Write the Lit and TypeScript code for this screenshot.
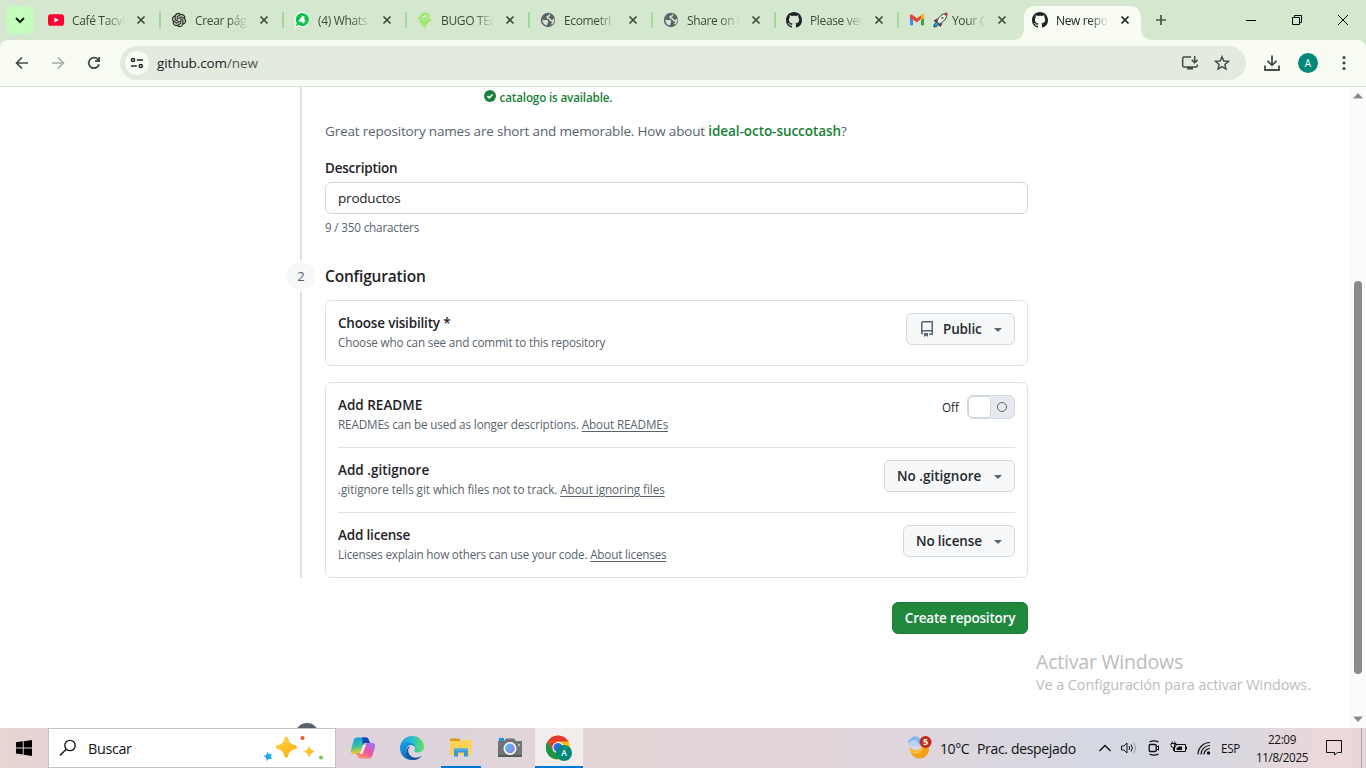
import { LitElement, html, css, svg } from "lit";
import { customElement } from "lit/decorators.js";

const githubMark = "M8 0c4.42 0 8 3.58 8 8a8.013 8.013 0 0 1-5.45 7.59c-.4.08-.55-.17-.55-.38 0-.27.01-1.13.01-2.2 0-.75-.25-1.23-.54-1.48 1.78-.2 3.65-.88 3.65-3.95 0-.88-.31-1.59-.82-2.15.08-.2.36-1.02-.08-2.12 0 0-.67-.22-2.2.82-.64-.18-1.32-.27-2-.27-.68 0-1.36.09-2 .27-1.53-1.03-2.2-.82-2.2-.82-.44 1.1-.16 1.92-.08 2.12-.51.56-.82 1.28-.82 2.15 0 3.06 1.86 3.75 3.64 3.95-.23.2-.44.55-.51 1.07-.46.21-1.61.55-2.33-.66-.15-.24-.6-.83-1.23-.82-.67.01-.27.38.01.53.34.19.73.9.82 1.13.16.45.68 1.31 2.69.94 0 .67.01 1.3.01 1.49 0 .21-.15.45-.55.38A7.995 7.995 0 0 1 0 8c0-4.42 3.58-8 8-8Z";
const knot = "M22.2819 9.8211a5.9847 5.9847 0 0 0-.5157-4.9108 6.0462 6.0462 0 0 0-6.5098-2.9A6.0651 6.0651 0 0 0 4.9807 4.1818a5.9847 5.9847 0 0 0-3.9977 2.9 6.0462 6.0462 0 0 0 .7427 7.0966 5.98 5.98 0 0 0 .511 4.9107 6.051 6.051 0 0 0 6.5146 2.9001A5.9847 5.9847 0 0 0 13.2599 24a6.0557 6.0557 0 0 0 5.7718-4.2058 5.9894 5.9894 0 0 0 3.9977-2.9001 6.0557 6.0557 0 0 0-.7475-7.0729zm-9.022 12.6081a4.4755 4.4755 0 0 1-2.8764-1.0408l.1419-.0804 4.7783-2.7582a.7948.7948 0 0 0 .3927-.6813v-6.7369l2.02 1.1686a.071.071 0 0 1 .038.052v5.5826a4.504 4.504 0 0 1-4.4945 4.4944zm-9.6607-4.1254a4.4708 4.4708 0 0 1-.5346-3.0137l.142.0852 4.783 2.7582a.7712.7712 0 0 0 .7806 0l5.8428-3.3685v2.3324a.0804.0804 0 0 1-.0332.0615L9.74 19.9502a4.4992 4.4992 0 0 1-6.1408-1.6464zM2.3408 7.8956a4.485 4.485 0 0 1 2.3655-1.9728V11.6a.7664.7664 0 0 0 .3879.6765l5.8144 3.3543-2.0201 1.1685a.0757.0757 0 0 1-.071 0l-4.8303-2.7865A4.504 4.504 0 0 1 2.3408 7.872zm16.5963 3.8558L13.1038 8.364 15.1192 7.2a.0757.0757 0 0 1 .071 0l4.8303 2.7913a4.4944 4.4944 0 0 1-.6765 8.1042v-5.6772a.79.79 0 0 0-.407-.667zm2.0107-3.0231l-.142-.0852-4.7735-2.7818a.7759.7759 0 0 0-.7854 0L9.409 9.2297V6.8974a.0662.0662 0 0 1 .0284-.0615l4.8303-2.7866a4.4992 4.4992 0 0 1 6.6802 4.66zM8.3065 12.863l-2.02-1.1638a.0804.0804 0 0 1-.038-.0567V6.0742a4.4992 4.4992 0 0 1 7.3757-3.4537l-.142.0805L8.704 5.459a.7948.7948 0 0 0-.3927.6813zm1.0976-2.3654l2.602-1.4998 2.6069 1.4998v2.9994l-2.5974 1.4997-2.6067-1.4997Z";

const icon = (w: number, h: number, body: unknown, vb = `0 0 ${w} ${h}`) =>
  html`<svg width=${w} height=${h} viewBox=${vb} fill="none">${body}</svg>`;

const globe = icon(16, 16, svg`<circle cx="8" cy="8" r="7.200" fill="#5f6368"/><path d="M2.300 7.300C4 9.200 6.300 7.200 7.800 8.600 9 9.800 7.200 10.800 7.600 12.200L6.500 13.600C4.300 13 2.300 11 2.300 7.300Z" fill="#d5e7cf"/><path d="M9.300 2.300c.7 1.400-.5 2-1.500 2.200-1.200.3-.6 1.700.6 1.700 1.800 0 1.600 2 2.700 2.500 1 .4 1.900-.2 2.600-.8-.1 1.800-.9 3.300-2.200 4.400" stroke="#d5e7cf" stroke-width="1.500"/>`);
const octo = icon(16, 16, svg`<path d=${githubMark} fill="#1f2328"/>`);

const favicons: Record<string, unknown> = {
  youtube: icon(16, 16, svg`<rect y="2.200" width="16" height="11.600" rx="2.600" fill="#ff0033"/><path d="M6.400 5.500v5L10.700 8Z" fill="#fff"/>`),
  chat: icon(16, 16, svg`<path d=${knot} transform="translate(1 1) scale(.5833)" fill="#222" stroke="#222" stroke-width=".5"/>`),
  whatsapp: icon(16, 16, svg`<path d="M8.200 0a7.500 7.500 0 1 1-3.600 14.200L.4 15.700 1.500 11.500A7.500 7.500 0 0 1 8.200 0Z" fill="#fff"/><path d="M8.200 1.100a6.500 6.500 0 1 1-3.300 12L2 14l.8-2.900A6.500 6.500 0 0 1 8.200 1.100Z" fill="#0fc243"/><path d="M9.200 4 6 8.800h5.200M9.400 4V11.300" stroke="#fff" stroke-width="1.900"/>`),
  bugo: icon(16, 16, svg`<path d="M4.500 11C2 8 3.500 2 8.500 1.700c3.500 0 4 2.800 2 4.300-1.500 1-3.500 1.500-5 1.200M4.500 8c1 3.500 5 3.300 9.500-.8" stroke="#9bea66" stroke-width="2.300"/><path d="M1.200 6.500 3 5M4.500 11.300c2 1.200 4.500 1.200 6 0" stroke="#9bea66" stroke-width="2"/><circle cx="7.600" cy="14.600" r="1.400" fill="#9bea66"/>`),
  globe,
  github: octo,
  gmail: icon(16, 16, svg`<path d="M1 3.500V13.300h3V7.500Z" fill="#4285f4"/><path d="M12 7.500v5.800h3V3.500Z" fill="#34a853"/><path d="M1 5.800V4c0-1.400 1.500-1.900 2.500-1.100L8 6.300l4.500-3.400C13.500 2.100 15 2.600 15 4L8 10.600Z" fill="#ea4335"/><path d="M12 3.300C13.200 2 15 2.600 15 4.200v1.700L12 8.200Z" fill="#fbbc04"/>`),
};

const rocket = icon(15, 16, svg`<path d="M4.300 6.700 1.200 8.900l2.600 1.200M9 11.400l-1.700 3-1.600-2.500" fill="#e8312a" stroke="#222" stroke-width=".8"/><path d="M4 9.600 1.200 12.300.9 15l2.500-.3 3-2.600Z" fill="#22a7f0" stroke="#222" stroke-width=".8"/><path d="M4 9.500C5.500 4.800 9 1.500 14 1.200c.2 4.800-3.300 8.800-7.800 10.900Z" fill="#f4f4f4" stroke="#222" stroke-width=".9"/><path d="M10.800 1.800 14 1.200l-.7 3.500Z" fill="#e8312a"/><circle cx="9.300" cy="6" r="1.300" fill="#777"/>`);

const tabs = [
  ["youtube", "Café Tacvb"], ["chat", "Crear pág"], ["whatsapp", "(4) Whats"], ["bugo", "BUGO TEC"],
  ["globe", "Ecometri"], ["globe", "Share on W"], ["github", "Please ver"], ["gmail", "Your G"], ["github", "New repo"],
];

const base = css`
  * { box-sizing: border-box; }
  :host { display: block; font-family: "Open Sans", "Noto Sans", sans-serif; }
  svg { display: block; flex: none; }
`;

@customElement("browser-chrome")
class BrowserChrome extends LitElement {
  static styles = [base, css`
    .strip { height: 40px; background: #d5e7cf; display: flex; align-items: flex-start; }
    .search { width: 28px; height: 28px; margin: 6px 6px 0; border-radius: 9px; background: #c5fdbd; display: grid; place-items: center; }
    .tab { width: 123px; height: 40px; padding-left: 8px; display: flex; align-items: center; position: relative; }
    .title { width: 53px; height: 18px; margin-left: 8px; white-space: nowrap; display: flex; align-items: center; gap: 4px; font-size: 12px; line-height: 18px; letter-spacing: -.35px; color: #3c4b3a;
      -webkit-mask-image: linear-gradient(90deg, #000 62%, transparent); mask-image: linear-gradient(90deg, #000 62%, transparent); }
    .title span { padding-top: 1px; }
    .close { margin-left: 11px; }
    .sep { width: 2px; height: 16px; margin-left: 13px; border-radius: 1px; background: #9fd898; }
    .active .title { color: #1c251b; }
    .active > * { position: relative; z-index: 1; }
    .active::before { content: ""; position: absolute; left: 0; top: 6px; width: 117px; height: 34px; border-radius: 10px 10px 0 0; background: #f8fcf3; }
    .active::after { content: ""; position: absolute; left: -10px; bottom: 0; width: 137px; height: 10px;
      background: radial-gradient(circle at 0 0, transparent 9.500px, #f8fcf3 10px) left / 10px 10px no-repeat, radial-gradient(circle at 10px 0, transparent 9.500px, #f8fcf3 10px) right / 10px 10px no-repeat; }
    .plus { margin: 14px 0 0 8px; }
    .controls { margin-left: auto; display: flex; gap: 30px; padding: 12px 15px 0 0; }
    .barwrap { background: #d5e7cf; }
    .bar { height: 47px; background: #f8fcf3; border-radius: 8px 8px 0 0; border-bottom: 1px solid #d9e4d2; display: flex; align-items: center; padding-left: 14px; }
    .nav { display: flex; gap: 20px; width: 106px; }
    .omni { width: 1126px; height: 34px; border-radius: 17px; background: #e3ebdf; display: flex; align-items: center; padding: 0 16px 0 5px; }
    .info { width: 24px; height: 24px; border-radius: 50%; background: #f8fcf3; display: grid; place-items: center; margin-right: 8px; }
    .url { flex: 1; font-size: 13.500px; letter-spacing: -.1px; color: #1a1f19; line-height: 20px; }
    .path { color: #4f584d; }
    .star { margin-left: 15px; }
    .dl { margin-left: 17px; }
    .avatar { width: 20px; height: 20px; margin-left: 17px; border-radius: 50%; background: #00897b; color: #fff; font-size: 10px; line-height: 20px; text-align: center; }
    .dots { margin-left: 24px; }
  `];
  render() {
    const x = (c: string) => icon(10, 10, svg`<path d="m1.500 1.500 7 7m0-7-7 7" stroke=${c} stroke-width="1.700"/>`);
    return html`
      <div class="strip">
        <div class="search">${icon(10, 8, svg`<path d="m1 2 4 4 4-4" stroke="#172016" stroke-width="2"/>`)}</div>
        ${tabs.map(([f, t], i) => html`
          <div class="tab ${i === 8 ? "active" : ""}">
            ${favicons[f]}
            <div class="title">${i === 7 ? rocket : ""}<span>${t}</span></div>
            <div class="close">${x(i === 8 ? "#1c251b" : "#3c4b3a")}</div>
            ${i < 7 ? html`<div class="sep"></div>` : ""}
          </div>`)}
        <div class="plus">${icon(12, 12, svg`<path d="M6 1v10M1 6h10" stroke="#465644" stroke-width="1.700"/>`)}</div>
        <div class="controls">
          ${icon(16, 16, svg`<path d="M3 8.500h10" stroke="#000"/>`)}
          ${icon(16, 16, svg`<path d="M3.500 5.500h7v7h-7zM5.500 5V3.500h7v7H11" stroke="#000"/>`)}
          ${icon(16, 16, svg`<path d="m3 3 10 10m0-10L3 13" stroke="#000"/>`)}
        </div>
      </div>
      <div class="barwrap"><div class="bar">
        <div class="nav">
          ${icon(16, 16, svg`<path d="M14 8H2.800M8 2.500 2.500 8 8 13.500" stroke="#3f4e3d" stroke-width="1.700"/>`)}
          ${icon(16, 16, svg`<path d="M2 8h11.200M8 2.500 13.500 8 8 13.500" stroke="#a4ada1" stroke-width="1.600"/>`)}
          ${icon(16, 16, svg`<path d="M13 9.200A5.200 5.200 0 1 1 11.900 4.500L13 5.700M13.100 2v4.200H9" stroke="#3f4e3d" stroke-width="1.800"/>`)}
        </div>
        <div class="omni">
          <div class="info">${icon(14, 14, svg`<g stroke="#20281f" stroke-width="1.500"><circle cx="3" cy="4" r="1.600"/><path d="M6.800 4H13M1 10h5.800"/><circle cx="10.800" cy="10" r="1.600"/></g>`)}</div>
          <div class="url">github.com<span class="path">/new</span></div>
          ${icon(18, 16, svg`<path d="M10 2H3a1.300 1.300 0 0 0-1.300 1.300v7.400A1.300 1.300 0 0 0 3 12h12a1.300 1.300 0 0 0 1.300-1.300V9.500M13.700 1v6.500M10.800 4.900l2.900 2.900 2.900-2.900" stroke="#3f4e3d" stroke-width="1.500"/><path d="M6 12h6v2.500H6z" fill="#3f4e3d"/>`)}
          <div class="star">${icon(16, 16, svg`<path d="m8 1.700 1.800 4.300 4.700.4-3.600 3.100 1.100 4.600L8 11.600l-4 2.500 1.100-4.600L1.500 6.400l4.700-.4Z" stroke="#3f4e3d" stroke-width="1.400"/>`)}</div>
        </div>
        <div class="dl">${icon(18, 18, svg`<path d="M9 1.500v9.500M4.500 6.800 9 11.300l4.500-4.500M2 11.500V16h14v-4.500" stroke="#3f4e3d" stroke-width="1.800"/>`)}</div>
        <div class="avatar">A</div>
        <div class="dots">${icon(4, 16, svg`<g fill="#3f4e3d"><circle cx="2" cy="2.500" r="1.600"/><circle cx="2" cy="8" r="1.600"/><circle cx="2" cy="13.500" r="1.600"/></g>`)}</div>
      </div></div>`;
  }
}

@customElement("repo-form")
class RepoForm extends LitElement {
  static styles = [base, css`
    :host { height: 641px; overflow: hidden; position: relative; background: #fff; color: #1f2328; display: flex; justify-content: space-between; }
    .col { width: 741px; margin-left: 287px; }
    .step { display: grid; grid-template-columns: 28px 703px; gap: 10px; }
    .rail { display: flex; flex-direction: column; align-items: center; }
    .line { width: 2px; flex: 1; background: #dfe3e8; }
    .one { height: 175px; }
    .one .rail { padding-bottom: 2px; }
    .two { height: 316px; }
    .num { width: 28px; height: 28px; margin-bottom: 2px; border-radius: 50%; background: #f6f8fa; color: #59636e; font-size: 13px; line-height: 29px; text-align: center; }
    .avail { display: flex; align-items: center; gap: 3.500px; height: 18px; padding-left: 159px; font-size: 11.700px; font-weight: 600; letter-spacing: -.17px; color: #1a7f37; }
    .avail span { padding-top: 1px; }
    .hint { margin-top: 16px; font-size: 13.500px; line-height: 21px; letter-spacing: -.175px; color: #59636e; white-space: nowrap; }
    .hint b { font-weight: 600; color: #1a7f37; letter-spacing: -.06px; }
    .label { margin-top: 16px; font-size: 13.500px; line-height: 20px; font-weight: 600; letter-spacing: -.22px; }
    .input { margin-top: 4px; height: 32px; border: 1px solid #d1d9e0; border-radius: 6px; padding: 0 12px; font-size: 13.500px; line-height: 31px; letter-spacing: -.2px; }
    .small { font-size: 11.700px; line-height: 18px; letter-spacing: -.17px; color: #59636e; white-space: nowrap; }
    .count { margin-top: 4px; letter-spacing: -.18px; }
    .readme .small { letter-spacing: -.13px; }
    .ignore .small { letter-spacing: -.06px; }
    .license .small { letter-spacing: -.19px; }
    h2 { margin: 3px 0 12px; font-size: 15.500px; line-height: 23px; font-weight: 600; letter-spacing: -.18px; }
    .box { border: 1px solid #dfe3e8; border-radius: 6px; padding: 0 12px; }
    .box + .box { margin-top: 16px; }
    .row { display: flex; justify-content: space-between; align-items: flex-start; height: 65px; padding-top: 12px; }
    .row + .row { border-top: 1px solid #dfe3e8; }
    .solo, .readme { height: 64px; }
    .name { font-size: 13.500px; line-height: 20px; font-weight: 600; letter-spacing: -.19px; }
    .readme .name, .ignore .name, .ignore .btn { letter-spacing: 0; }
    u { text-underline-offset: 2px; }
    .btn { height: 32px; border: 1px solid #d1d9e0; border-radius: 6px; background: #f6f8fa; display: flex; align-items: center; padding: 0 8px 0 12px; font-size: 13.500px; font-weight: 600; letter-spacing: -.15px; color: #25292e; white-space: nowrap; }
    .btn .repo { margin-right: 8px; }
    .btn .caret { margin-left: auto; }
    .vis { width: 109px; } .ign { width: 131px; } .lic { width: 112px; }
    .toggle { display: flex; align-items: center; gap: 8px; font-size: 11.700px; letter-spacing: 0; }
    .switch { width: 48px; height: 24px; border: 1px solid #d1d9e0; border-radius: 6px; background: #e6eaef; display: flex; align-items: center; }
    .knob { width: 23px; height: 22px; border: 1px solid #d1d9e0; border-radius: 5px; background: #fff; }
    .off { width: 10px; height: 10px; margin-left: 6px; border: 1.500px solid #59636e; border-radius: 50%; }
    .create { display: block; width: 136px; height: 32px; margin: 24px 0 0 auto; border-radius: 6px; border: 1px solid #1d7b36; background: #1f883d; color: #fff; text-align: center; font-size: 13.500px; line-height: 31px; font-weight: 600; letter-spacing: -.2px; white-space: nowrap; }
    .footer { margin: 89px 0 0 8px; }
    .bar { width: 16px; background: #fcfcfc; display: flex; flex-direction: column; align-items: center; padding: 6px 0; }
    .thumb { width: 8px; height: 393px; border-radius: 4px; background: #8b8b8b; margin-top: 182px; }
    .bar .down { margin-top: auto; }
    .mark { position: absolute; left: 1036px; top: 561px; color: #bbb; white-space: nowrap; }
    .big { font-size: 19.500px; line-height: 27px; letter-spacing: -.2px; }
    .sub { font-size: 14.400px; line-height: 20px; letter-spacing: -.06px; }
  `];
  render() {
    const caret = html`<span class="caret">${icon(16, 16, svg`<path fill="#59636e" d="m4.427 7.427 3.396 3.396a.25.25 0 0 0 .354 0l3.396-3.396A.25.25 0 0 0 11.396 7H4.604a.25.25 0 0 0-.177.427Z"/>`)}</span>`;
    return html`
      <div class="col">
        <div class="step one">
          <div class="rail"><div class="line"></div></div>
          <div>
            <div class="avail">${icon(12, 12, svg`<path fill="#1a7f37" d="M8 16A8 8 0 1 1 8 0a8 8 0 0 1 0 16Z"/><path d="m4.600 8.200 2.300 2.300 4.500-4.500" stroke="#fff" stroke-width="2"/>`, "0 0 16 16")}<span>catalogo is available.</span></div>
            <div class="hint">Great repository names are short and memorable. How about <b>ideal-octo-succotash</b>?</div>
            <div class="label">Description</div>
            <div class="input">productos</div>
            <div class="small count">9 / 350 characters</div>
          </div>
        </div>
        <div class="step two">
          <div class="rail"><div class="num">2</div><div class="line"></div></div>
          <div>
            <h2>Configuration</h2>
            <div class="box"><div class="row solo">
              <div><div class="name">Choose visibility *</div><div class="small">Choose who can see and commit to this repository</div></div>
              <div class="btn vis"><span class="repo">${icon(16, 16, svg`<path fill="#59636e" d="M2 2.500A2.500 2.500 0 0 1 4.500 0h8.750a.75.75 0 0 1 .75.75v12.500a.75.75 0 0 1-.75.75h-2.500a.75.75 0 0 1 0-1.500h1.750v-2h-8a1 1 0 0 0-.714 1.700.75.75 0 1 1-1.072 1.050A2.495 2.495 0 0 1 2 11.500Zm10.500-1h-8a1 1 0 0 0-1 1v6.708A2.486 2.486 0 0 1 4.500 9h8ZM5 12.250a.25.25 0 0 1 .25-.25h3.500a.25.25 0 0 1 .25.25v3.250a.25.25 0 0 1-.4.2l-1.450-1.087a.249.249 0 0 0-.3 0L5.400 15.700a.25.25 0 0 1-.4-.2Z"/>`)}</span>Public${caret}</div>
            </div></div>
            <div class="box">
              <div class="row readme">
                <div><div class="name">Add README</div><div class="small">READMEs can be used as longer descriptions. <u>About READMEs</u></div></div>
                <div class="toggle">Off<div class="switch"><div class="knob"></div><div class="off"></div></div></div>
              </div>
              <div class="row ignore">
                <div><div class="name">Add .gitignore</div><div class="small">.gitignore tells git which files not to track. <u>About ignoring files</u></div></div>
                <div class="btn ign">No .gitignore${caret}</div>
              </div>
              <div class="row license">
                <div><div class="name">Add license</div><div class="small">Licenses explain how others can use your code. <u>About licenses</u></div></div>
                <div class="btn lic">No license${caret}</div>
              </div>
            </div>
          </div>
        </div>
        <div class="create">Create repository</div>
        <div class="footer">${icon(24, 24, svg`<path d=${githubMark} fill="#59636e"/>`, "0 0 16 16")}</div>
      </div>
      <div class="bar">
        ${icon(10, 6, svg`<path d="m5 0 5 5.500H0Z" fill="#8b8b8b"/>`)}
        <div class="thumb"></div>
        <div class="down">${icon(10, 6, svg`<path d="m5 6 5-5.500H0Z" fill="#8b8b8b"/>`)}</div>
      </div>
      <div class="mark"><div class="big">Activar Windows</div><div class="sub">Ve a Configuración para activar Windows.</div></div>`;
  }
}

@customElement("task-bar")
class TaskBar extends LitElement {
  static styles = [base, css`
    .bar { height: 40px; display: flex; align-items: center; color: #111; background: linear-gradient(90deg, #e9d6d3 0, #e4d3d3 50px, #e0d3db 340px, #ddd5db 450px, #e4d5d6 600px, #e0d5dc 880px, #d5d9e3 1110px, #dcd7df 1250px, #ecd7d8 1335px, #e6d6da 1366px); }
    .start { width: 48px; display: grid; place-items: center; }
    .find { width: 288px; height: 40px; border: 1px solid #c5c5c5; background: #fff; display: flex; align-items: center; padding: 0 10px 0 10px; font-size: 14.400px; letter-spacing: -.35px; gap: 11px; }
    .find span { flex: 1; }
    .app { width: 49px; height: 40px; display: grid; place-items: center; }
    .first { margin-left: 2px; }
    .open { width: 40px; margin: 0 4px 0 5px; box-shadow: inset 0 -2px #0078d7; }
    .cur { width: 48px; margin-left: 1px; background: #f2ecec; box-shadow: inset 0 -2px #0078d7; }
    .wx { margin-left: 324px; }
    .temp { margin-left: 8px; font-size: 14px; letter-spacing: -.4px; width: 37px; white-space: nowrap; }
    .cond { font-size: 14px; letter-spacing: -.33px; width: 120px; white-space: nowrap; }
    .tray { display: flex; align-items: center; gap: 8px; margin-left: 1px; }
    .esp { font-size: 11.700px; letter-spacing: -.3px; margin-left: 1px; width: 23px; }
    .clock { width: 66px; margin-left: 5px; text-align: center; font-size: 11.700px; line-height: 18px; letter-spacing: -.35px; white-space: nowrap; }
    .note { margin-left: 10px; }
    .peek { margin-left: auto; width: 5px; height: 40px; border-left: 1px solid #aaa4a9; }
  `];
  render() {
    return html`<div class="bar">
      <div class="start">${icon(16, 16, svg`<path d="M0 2.300 6.800 1.300v6.200H0ZM7.700 1.200 16 0v7.500H7.700ZM0 8.400h6.800v6.200L0 13.600ZM7.700 8.400H16V16L7.700 14.800Z" fill="#000"/>`)}</div>
      <div class="find">
        ${icon(18, 18, svg`<circle cx="11" cy="6.500" r="5.200" stroke="#111" stroke-width="1.300"/><path d="M7.300 10.200 1 16.500" stroke="#111" stroke-width="1.400"/>`)}
        <span>Buscar</span>
        ${icon(62, 28, svg`<defs><linearGradient id="st" x2="1" y2="1"><stop stop-color="#ffdb55"/><stop offset="1" stop-color="#f6a800"/></linearGradient></defs>
          <path d="M21.500 4c.8-2 2.700-2 3.500 0 1.200 4.500 2.200 5.500 6.500 7 3.300 1.200 3.300 3 0 4.200-4.300 1.500-5.300 2.600-6.500 7-.8 2.200-2.700 2.200-3.500 0-1.200-4.400-2.200-5.500-6.500-7-3.300-1.200-3.300-3 0-4.200 4.300-1.500 5.300-2.500 6.500-7Z" fill="url(#st)"/>
          <path d="M46 11.500q1.200 5 6 6-4.800 1-6 6-1.200-5-6-6 4.800-1 6-6Z" fill="url(#st)"/>
          <path d="m4 17.500 1.700 2.400 3-.2-1 2.900 1.200 2.700-3-.6L3.500 27l-.3-3.200L.5 22l3-1Z" fill="#1ba8f0"/><circle cx="39.500" cy="4" r="2.100" fill="#f1592a"/><circle cx="58" cy="23.500" r="2" fill="#84c341"/>`)}
      </div>
      <div class="app first">${icon(26, 24, svg`<defs><linearGradient id="cl" x2=".2" y2="1"><stop stop-color="#0a9cf0"/><stop offset=".55" stop-color="#38bfa0"/><stop offset="1" stop-color="#f2cf24"/></linearGradient><linearGradient id="cr" x1=".7" x2=".1" y2="1"><stop stop-color="#a66cf0"/><stop offset=".5" stop-color="#f0559c"/><stop offset="1" stop-color="#ffa05a"/></linearGradient></defs>
        <path d="M7 1.500h9c2 0 2.500 1.500 3 3L20 7h-4c-2 0-2.700 1-3.300 3l-2 6c-.6 1.500-1.500 2-3 2H4c-3 0-3.500-2-3-4.500L3.500 5C4.200 2.500 5 1.500 7 1.500Z" fill="url(#cl)"/><path d="M12 1.500h4c2 0 2.500 1.500 3 3L20 7h-4c-2 0-2.500.5-3 2Z" fill="#1746b8"/>
        <path d="M19 22.500h-9c-2 0-2.500-1.500-3-3L6.200 17H10c2 0 2.700-1 3.300-3l2-5c.6-1.500 1.500-2 3-2H22c3 0 3.500 2 3 4.500L22.500 19c-.7 2.500-1.500 3.500-3.500 3.500Z" fill="url(#cr)"/><path d="M13 9h3l-3.500 9H10Z" fill="#f3e8f2"/>`)}</div>
      <div class="app">${icon(24, 24, svg`<defs><linearGradient id="e1" x2="1"><stop stop-color="#199be0"/><stop offset=".5" stop-color="#27bfd3"/><stop offset="1" stop-color="#65e257"/></linearGradient><linearGradient id="e2" x2=".5" y2="1"><stop stop-color="#1aa3e8"/><stop offset="1" stop-color="#0c65b8"/></linearGradient></defs>
        <path d="M0 11C1 4 6 0 12 0c7 0 12 5 12 10.500 0 4-3 6-6.500 6-3 0-4-1-3-2.200 1.200-1.600.6-5.300-3.500-5.300C6.500 9 3 9 0 11Z" fill="url(#e1)"/><path d="M0 12c0-4 3.500-6 7-6 4 0 7.500 2 8 5-1-1.500-2.500-2-4-2-3 0-4.500 2.500-4.500 5.500 0 4 3 8.500 8 9C7 25.500 0 20 0 12Z" fill="url(#e2)"/><path d="M10.500 10.500C8 12 7.500 15 9 18c2.300 4.300 8 5 13 1.500C19.500 23 16 24.500 12.500 23.800 7.500 22.500 5.500 17 7 13c.7-2 2-2.800 3.500-2.500Z" fill="#104f96"/>`)}</div>
      <div class="app open">${icon(22, 20, svg`<path d="M0 1.500Q0 .5 1 .5h8l2 2.500H0Z" fill="#d99b12"/><path d="M0 3h11l2-1h8.500v15H0Z" fill="#ffd257"/><path d="M4 18.500v-8h14v8h-4v-4H8v4Z" fill="#3a97dd"/><path d="M4 10.500h14v2H4Z" fill="#53aeea"/>`)}</div>
      <div class="app">${icon(24, 20, svg`<defs><linearGradient id="ca" x2="1" y2="1"><stop stop-color="#42c7ef"/><stop offset="1" stop-color="#a875e8"/></linearGradient></defs><path d="M1 0h5v3H1Z" fill="#1595dd"/><path d="M0 3h6l2-2.500h8L18 3h6v16H0Z" fill="#717477"/><path d="M0 17h24v2H0Z" fill="#55585b"/><circle cx="12" cy="10.500" r="6.500" fill="#fff"/><circle cx="12" cy="10.500" r="4.900" fill="url(#ca)"/><path d="M20 6h2v2h-2Z" fill="#b8babc"/>`)}</div>
      <div class="app cur">${icon(26, 26, svg`<circle cx="12" cy="12.500" r="12" fill="#fbc116"/><path d="M1.600 6.500A12 12 0 0 1 22.500 6.500H12Z" fill="#e33b2e"/><path d="M1.600 6.500A12 12 0 0 0 11.500 24.500L17 15.500 7 15.500Z" fill="#229342"/><path d="M1.600 6.500 7 15.500 12 6.500Z" fill="#e33b2e"/><path d="M1.600 6.500 7 15.500l3 3-3 5A12 12 0 0 1 1.600 6.500Z" fill="#229342"/><circle cx="12" cy="12.500" r="5.600" fill="#fff"/><circle cx="12" cy="12.500" r="4.500" fill="#2a6fe8"/><circle cx="18" cy="18" r="8" fill="#00897b"/><text x="18" y="21" fill="#fff" font-size="8.500" font-weight="600" text-anchor="middle">A</text>`)}</div>
      <div class="wx">${icon(25, 24, svg`<path d="M3 11c3.500 5 11 4.500 15-3.500l4 4c1 6-3.500 11-9.500 11C7 22.500 3 18 3 11Z" fill="#f5a01c"/><path d="M2.500 12c4 4 10 3.500 14-2 0 5-4 8-8.500 8-3 0-5-2.500-5.500-6Z" fill="#ffbd3a"/><path d="M3 9.500A3.500 3.500 0 0 1 3.500 3 5.500 5.500 0 0 1 13 3v6.500Z" fill="#82b4f0"/><path d="M3 9.500C.5 8.500 1 5 4 5.500c2-2.500 6-2 7 1.500l3 2.500Z" fill="#b9d6f8"/><circle cx="18.500" cy="6" r="6" fill="#c42b1c"/><text x="18.500" y="9.200" fill="#fff" font-size="9" font-weight="700" text-anchor="middle">5</text>`)}</div>
      <div class="temp">10°C</div><div class="cond">Prac. despejado</div>
      <div class="tray">
        ${icon(14, 16, svg`<path d="m1.500 11 5.500-5.500L12.500 11" stroke="#111" stroke-width="1.300"/>`)}
        ${icon(18, 16, svg`<path d="M1.500 6h2.300L7 3v10L3.800 10H1.500Z" stroke="#111"/><path d="M9 6q1.500 2 0 4M11 4.500q2.800 3.500 0 7" stroke="#111"/><path d="M13.500 3q4 5 0 10" stroke="#999"/>`)}
        ${icon(16, 16, svg`<path d="M3.500 2Q8 -.2 12.500 2M3.500 14Q8 16.200 12.500 14" stroke="#111" stroke-width="1.200"/><rect x="3.200" y="4.500" width="7" height="7" rx="1" stroke="#111" stroke-width="1.300"/><path d="m10.500 7 2-1.200v4.400l-2-1.200" stroke="#111"/>`)}
        ${icon(18, 16, svg`<path d="M4.500 4.500h11v7h-11zM16.500 6.500v3" stroke="#111"/><path d="M8.500 6.500H12v3.500H6.500V8.500Z" fill="#111"/><path d="M1 3.500h5v2Q6 7.500 3.500 7.500T1 5.500ZM2.200 1.500v2m2.600-2v2M3.500 7.500v3h1.500" stroke="#111"/>`)}
        ${icon(16, 16, svg`<path d="M2 14.500A12 12 0 0 1 14 2.500M5 14.500a9 9 0 0 1 9-9M8 14.500a6 6 0 0 1 6-6" stroke="#111" stroke-width="1.200"/><circle cx="12.500" cy="13" r="1.700" fill="#111"/>`)}
        <div class="esp">ESP</div>
      </div>
      <div class="clock">22:09<br>11/8/2025</div>
      <div class="note">${icon(18, 18, svg`<path d="M1.500 1.500h15v12h-4L9.500 16V13.500h-8Z" stroke="#111"/>`)}</div>
      <div class="peek"></div>
    </div>`;
  }
}

@customElement("app-root")
class AppRoot extends LitElement {
  static styles = css`:host { display: block; width: 1366px; height: 768px; overflow: hidden; }`;
  render() {
    return html`<browser-chrome></browser-chrome><repo-form></repo-form><task-bar></task-bar>`;
  }
}
